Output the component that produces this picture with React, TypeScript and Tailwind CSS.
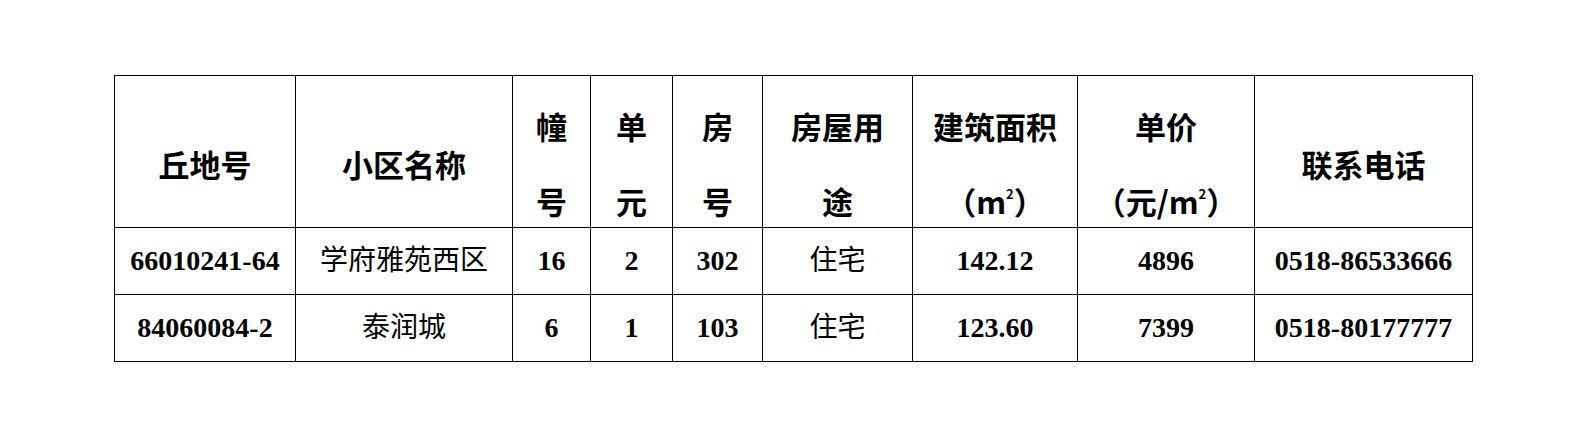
const HEAD_FONT = "font-['Noto_Sans_CJK_SC',sans-serif] font-bold";
const DATA_FONT = "font-['Liberation_Serif','Noto_Sans_CJK_SC',serif]";

type Row = {
  plot: string;
  estate: string;
  building: string;
  unit: string;
  room: string;
  usage: string;
  area: string;
  price: string;
  phone: string;
};

const ROWS: Row[] = [
  {
    plot: '66010241-64',
    estate: '学府雅苑西区',
    building: '16',
    unit: '2',
    room: '302',
    usage: '住宅',
    area: '142.12',
    price: '4896',
    phone: '0518-86533666',
  },
  {
    plot: '84060084-2',
    estate: '泰润城',
    building: '6',
    unit: '1',
    room: '103',
    usage: '住宅',
    area: '123.60',
    price: '7399',
    phone: '0518-80177777',
  },
];

const WIDTHS = [181, 217, 78, 82, 90, 150, 165, 177, 218];

function Head({ lines }: { lines: React.ReactNode[] }) {
  return (
    <th className="border border-black p-0 align-top">
      <div className={`flex h-[151px] flex-col items-center justify-center gap-[39px] pt-[24px] text-[31px] leading-[36px] text-black ${HEAD_FONT}`}>
        {lines.map((l, i) => (
          <span key={i} className="whitespace-nowrap">
            {l}
          </span>
        ))}
      </div>
    </th>
  );
}

const sq = (
  <>
    m<sup className="relative -top-[4px] align-super text-[13px]">2</sup>
  </>
);

export default function App() {
  return (
    <div className="min-h-[438px] w-[1587px] bg-white pl-[114px] pt-[75px]">
      <table className="w-[1359px] table-fixed border-collapse">
        <colgroup>
          {WIDTHS.map((w, i) => (
            <col key={i} style={{ width: w }} />
          ))}
        </colgroup>
        <thead>
          <tr>
            <Head lines={['丘地号']} />
            <Head lines={['小区名称']} />
            <Head lines={['幢', '号']} />
            <Head lines={['单', '元']} />
            <Head lines={['房', '号']} />
            <Head lines={['房屋用', '途']} />
            <Head lines={['建筑面积', <>（{sq}）</>]} />
            <Head lines={['单价', <>（元/{sq}）</>]} />
            <Head lines={['联系电话']} />
          </tr>
        </thead>
        <tbody>
          {ROWS.map((r) => (
            <tr key={r.plot} className="h-[67px]">
              <td className={`border border-black text-center text-[28px] font-bold text-black ${DATA_FONT}`}>{r.plot}</td>
              <td className={`border border-black text-center text-[28px] text-black ${DATA_FONT}`}>{r.estate}</td>
              <td className={`border border-black text-center text-[28px] font-bold text-black ${DATA_FONT}`}>{r.building}</td>
              <td className={`border border-black text-center text-[28px] font-bold text-black ${DATA_FONT}`}>{r.unit}</td>
              <td className={`border border-black text-center text-[28px] font-bold text-black ${DATA_FONT}`}>{r.room}</td>
              <td className={`border border-black text-center text-[28px] text-black ${DATA_FONT}`}>{r.usage}</td>
              <td className={`border border-black text-center text-[28px] font-bold text-black ${DATA_FONT}`}>{r.area}</td>
              <td className={`border border-black text-center text-[28px] font-bold text-black ${DATA_FONT}`}>{r.price}</td>
              <td className={`border border-black text-center text-[28px] font-bold text-black ${DATA_FONT}`}>{r.phone}</td>
            </tr>
          ))}
        </tbody>
      </table>
    </div>
  );
}
